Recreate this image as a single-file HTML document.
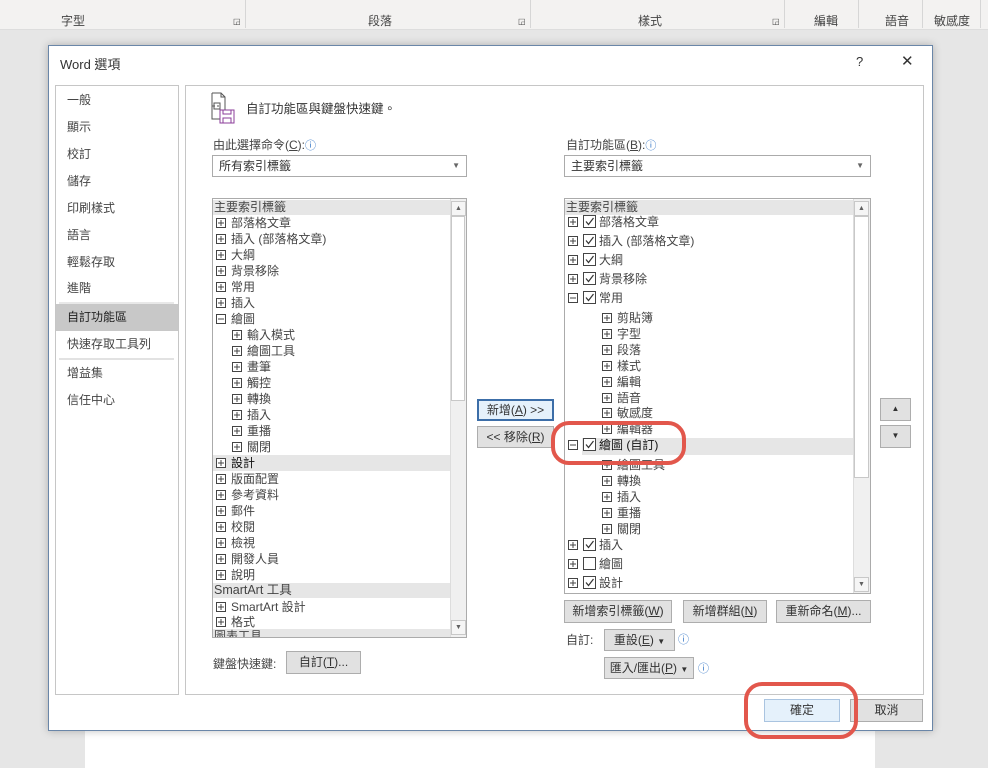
<!DOCTYPE html>
<html><head><meta charset="utf-8"><style>
*{margin:0;padding:0;box-sizing:border-box}
body{width:988px;height:765px;overflow:hidden;background:#e6e6e6;position:relative;font-family:"Liberation Sans","Noto Sans CJK TC",sans-serif;font-size:12px;color:#444}
.a{position:absolute;white-space:nowrap}
.r{position:absolute;white-space:nowrap;line-height:16px;height:16px;font-size:12px;color:#444}
.r svg{vertical-align:-1px;margin-right:5px}
.btn{position:absolute;background:#e1e1e1;border:1px solid #adadad;text-align:center;font-size:12px;color:#333;line-height:20px}
.box{position:absolute;border:1px solid #ababab;background:#fff}
.sb{position:absolute;background:#f0f0f0;border-left:1px solid #ddd}
.arr{position:absolute;width:15px;height:15px;border:1px solid #c8c8c8;background:#f5f5f5;font-size:7px;text-align:center;line-height:13px;color:#606060}
.hd{position:absolute;background:#e6e6e6;line-height:15px;height:15px;font-size:12px;color:#444}
</style></head><body>
<div class="a" style="left:0;top:0;width:988px;height:30px;background:#f3f2f1;border-bottom:1px solid #ddd"></div>
<div class="a" style="left:61px;top:12px;font-size:12px;color:#444">字型</div>
<div class="a" style="left:368px;top:12px;">段落</div>
<div class="a" style="left:638px;top:12px;">樣式</div>
<div class="a" style="left:814px;top:12px;">編輯</div>
<div class="a" style="left:885px;top:12px;">語音</div>
<div class="a" style="left:934px;top:12px;">敏感度</div>
<div class="a" style="left:233px;top:17px;font-size:8px">◲</div>
<div class="a" style="left:518px;top:17px;font-size:8px">◲</div>
<div class="a" style="left:772px;top:17px;font-size:8px">◲</div>
<div class="a" style="left:245px;top:0;width:1px;height:28px;background:#d6d6d6"></div>
<div class="a" style="left:530px;top:0;width:1px;height:28px;background:#d6d6d6"></div>
<div class="a" style="left:784px;top:0;width:1px;height:28px;background:#d6d6d6"></div>
<div class="a" style="left:858px;top:0;width:1px;height:28px;background:#d6d6d6"></div>
<div class="a" style="left:922px;top:0;width:1px;height:28px;background:#d6d6d6"></div>
<div class="a" style="left:980px;top:0;width:1px;height:28px;background:#d6d6d6"></div>
<div class="a" style="left:85px;top:728px;width:790px;height:40px;background:#fff"></div>
<div class="a" style="left:48px;top:45px;width:885px;height:686px;background:#fff;border:1px solid #6a86a8;box-shadow:0 0 8px rgba(0,0,0,.25)"></div>
<div class="a" style="left:60px;top:54px;font-size:13px;color:#333">Word 選項</div>
<div class="a" style="left:856px;top:54px;font-size:13px;color:#333">?</div>
<div class="a" style="left:901px;top:52px;font-size:15px;color:#333">✕</div>
<div class="a" style="left:55px;top:85px;width:124px;height:610px;border:1px solid #c6c6c6;background:#fff"></div>
<div class="a" style="left:67px;top:92px;line-height:16px">一般</div>
<div class="a" style="left:67px;top:119px;line-height:16px">顯示</div>
<div class="a" style="left:67px;top:146px;line-height:16px">校訂</div>
<div class="a" style="left:67px;top:173px;line-height:16px">儲存</div>
<div class="a" style="left:67px;top:200px;line-height:16px">印刷樣式</div>
<div class="a" style="left:67px;top:227px;line-height:16px">語言</div>
<div class="a" style="left:67px;top:254px;line-height:16px">輕鬆存取</div>
<div class="a" style="left:67px;top:280px;line-height:16px">進階</div>
<div class="a" style="left:59px;top:302px;width:115px;height:2px;background:#e8e8e8"></div>
<div class="a" style="left:56px;top:304px;width:122px;height:27px;background:#c8c8c8"></div>
<div class="a" style="left:67px;top:309px;line-height:16px;color:#222">自訂功能區</div>
<div class="a" style="left:67px;top:336px;line-height:16px">快速存取工具列</div>
<div class="a" style="left:59px;top:358px;width:115px;height:2px;background:#e2e2e2"></div>
<div class="a" style="left:67px;top:365px;line-height:16px">增益集</div>
<div class="a" style="left:67px;top:392px;line-height:16px">信任中心</div>
<div class="a" style="left:185px;top:85px;width:739px;height:610px;border:1px solid #c6c6c6;background:#fff"></div>
<svg class="a" style="left:209px;top:92px" width="30" height="32" viewBox="0 0 30 32"><path d="M3 1h9l4 4v14" fill="none" stroke="#555"/><path d="M3 1v26h8" fill="none" stroke="#555"/><path d="M12 1v4h4" fill="none" stroke="#555"/><rect x="5" y="11" width="6" height="6" fill="none" stroke="#555"/><path d="M6 14h-3M8 14h2" stroke="#555"/><rect x="11" y="18" width="14" height="13" fill="#fff" stroke="#8b3c9a"/><path d="M14 18v4h8v-4M14 31v-5h8v5" fill="none" stroke="#8b3c9a"/></svg>
<div class="a" style="left:246px;top:98px;font-size:12.5px;color:#333">自訂功能區與鍵盤快速鍵。</div>
<div class="a" style="left:213px;top:136px">由此選擇命令(<u>C</u>):<span style="color:#3a7ac8;font-size:11px">ⓘ</span></div>
<div class="a" style="left:566px;top:136px">自訂功能區(<u>B</u>):<span style="color:#3a7ac8;font-size:11px">ⓘ</span></div>
<div class="box" style="left:212px;top:155px;width:255px;height:22px;padding-left:6px;line-height:20px;color:#333">所有索引標籤<span style="position:absolute;right:6px;top:0;font-size:8px;color:#666">▼</span></div>
<div class="box" style="left:564px;top:155px;width:307px;height:22px;padding-left:6px;line-height:20px;color:#333">主要索引標籤<span style="position:absolute;right:6px;top:0;font-size:8px;color:#666">▼</span></div>

<div class="box" style="left:212px;top:198px;width:255px;height:440px;overflow:hidden">
<div class="hd" style="left:0;top:1px;width:237px;padding-left:1px">主要索引標籤</div>
<div class="a" style="left:0;top:256px;width:237px;height:16px;background:#e6e6e6"></div>
<div class="hd" style="left:0;top:384px;width:237px;padding-left:1px;font-size:12.5px">SmartArt 工具</div>
<div class="hd" style="left:0;top:430px;width:237px;padding-left:1px">圖表工具</div>
<div class="sb" style="left:237px;top:0;width:16px;height:438px"></div>
<div class="arr" style="left:238px;top:2px">▲</div>
<div class="a" style="left:238px;top:17px;width:14px;height:185px;background:#fff;border:1px solid #c8c8c8"></div>
<div class="arr" style="left:238px;top:421px">▼</div>
</div>

<div class="box" style="left:564px;top:198px;width:307px;height:396px;overflow:hidden">
<div class="hd" style="left:0;top:1px;width:288px;padding-left:1px">主要索引標籤</div>
<div class="a" style="left:17px;top:239px;width:271px;height:17px;background:#e6e6e6"></div>
<div class="sb" style="left:288px;top:0;width:17px;height:394px"></div>
<div class="arr" style="left:289px;top:2px">▲</div>
<div class="a" style="left:289px;top:17px;width:15px;height:262px;background:#fff;border:1px solid #c8c8c8"></div>
<div class="arr" style="left:289px;top:378px">▼</div>
</div>

<div class="btn" style="left:477px;top:399px;width:77px;height:22px;border:2px solid #3c6ea8;background:#e5f1fb;line-height:18px">新增(<u>A</u>) &gt;&gt;</div>
<div class="btn" style="left:477px;top:426px;width:77px;height:22px">&lt;&lt; 移除(<u>R</u>)</div>
<div class="btn" style="left:880px;top:398px;width:31px;height:23px;font-size:8px">▲</div>
<div class="btn" style="left:880px;top:425px;width:31px;height:23px;font-size:8px">▼</div>

<div class="btn" style="left:564px;top:600px;width:108px;height:23px">新增索引標籤(<u>W</u>)</div>
<div class="btn" style="left:683px;top:600px;width:84px;height:23px">新增群組(<u>N</u>)</div>
<div class="btn" style="left:776px;top:600px;width:95px;height:23px">重新命名(<u>M</u>)...</div>
<div class="a" style="left:566px;top:631px">自訂:</div>
<div class="btn" style="left:604px;top:629px;width:71px;height:22px">重設(<u>E</u>) <span style="font-size:8px">▼</span></div>
<div class="a" style="left:678px;top:631px;color:#3a7ac8;font-size:11px">ⓘ</div>
<div class="btn" style="left:604px;top:657px;width:90px;height:22px">匯入/匯出(<u>P</u>) <span style="font-size:8px">▼</span></div>
<div class="a" style="left:698px;top:660px;color:#3a7ac8;font-size:11px">ⓘ</div>
<div class="a" style="left:213px;top:655px">鍵盤快速鍵:</div>
<div class="btn" style="left:286px;top:651px;width:75px;height:23px">自訂(<u>T</u>)...</div>

<div class="btn" style="left:764px;top:699px;width:76px;height:23px;background:#e5f1fb;border-color:#aac4e0">確定</div>
<div class="btn" style="left:850px;top:699px;width:73px;height:23px">取消</div>

<div id="LL"></div>
<script>
function pb(m){return '<svg width="10" height="10"><rect x=".5" y=".5" width="9" height="9" fill="#fff" stroke="#444"/><path d="M2 5h6'+(m?'':'M5 2v6')+'" stroke="#444"/></svg>';}
function cb(c){return '<svg width="13" height="13" style="margin-right:3px;vertical-align:-2px"><rect x=".5" y=".5" width="12" height="12" fill="#fff" stroke="#444"/>'+(c?'<path d="M3 6.5l2.5 3L10.5 3" fill="none" stroke="#333" stroke-width="1.2"/>':'')+'</svg>';}
var h='';
var L=[[215,0,'部落格文章'],[231,0,'插入 (部落格文章)'],[247,0,'大綱'],[263,0,'背景移除'],[279,0,'常用'],[295,0,'插入'],[311,0,'繪圖',1],[327,1,'輸入模式'],[343,1,'繪圖工具'],[359,1,'畫筆'],[375,1,'觸控'],[391,1,'轉換'],[407,1,'插入'],[423,1,'重播'],[439,1,'關閉'],[455,0,'設計',0,1],[471,0,'版面配置'],[487,0,'參考資料'],[503,0,'郵件'],[519,0,'校閱'],[535,0,'檢視'],[551,0,'開發人員'],[567,0,'說明'],[599,0,'SmartArt 設計'],[614,0,'格式']];
L.forEach(function(e){h+='<div class="r" style="left:'+(e[1]?232:216)+'px;top:'+e[0]+'px;'+(e[4]?'color:#111':'')+'">'+pb(e[3])+e[2]+'</div>';});
var R=[[214,0,'部落格文章',0,1],[233,0,'插入 (部落格文章)',0,1],[252,0,'大綱',0,1],[271,0,'背景移除',0,1],[290,0,'常用',1,1],[310,1,'剪貼簿'],[326,1,'字型'],[342,1,'段落'],[358,1,'樣式'],[374,1,'編輯'],[390,1,'語音'],[405,1,'敏感度'],[421,1,'編輯器'],[437,0,'繪圖 (自訂)',1,1,1],[457,1,'繪圖工具'],[473,1,'轉換'],[489,1,'插入'],[505,1,'重播'],[521,1,'關閉'],[537,0,'插入',0,1],[556,0,'繪圖',0,2],[575,0,'設計',0,1]];
R.forEach(function(e){var s=e[1]?'left:602px;':'left:568px;';h+='<div class="r" style="'+s+'top:'+e[0]+'px;'+(e[5]?'color:#111':'')+'">'+pb(e[3])+(e[1]?'':cb(e[4]==1))+e[2]+'</div>';});
document.getElementById('LL').innerHTML=h;
</script>
<svg class="a" style="left:0;top:0" width="988" height="765"><rect x="553" y="423" width="131" height="40" rx="16" fill="none" stroke="#e2574c" stroke-width="4"/><rect x="746" y="684" width="110" height="53" rx="16" fill="none" stroke="#e2574c" stroke-width="4"/></svg>
</body></html>
